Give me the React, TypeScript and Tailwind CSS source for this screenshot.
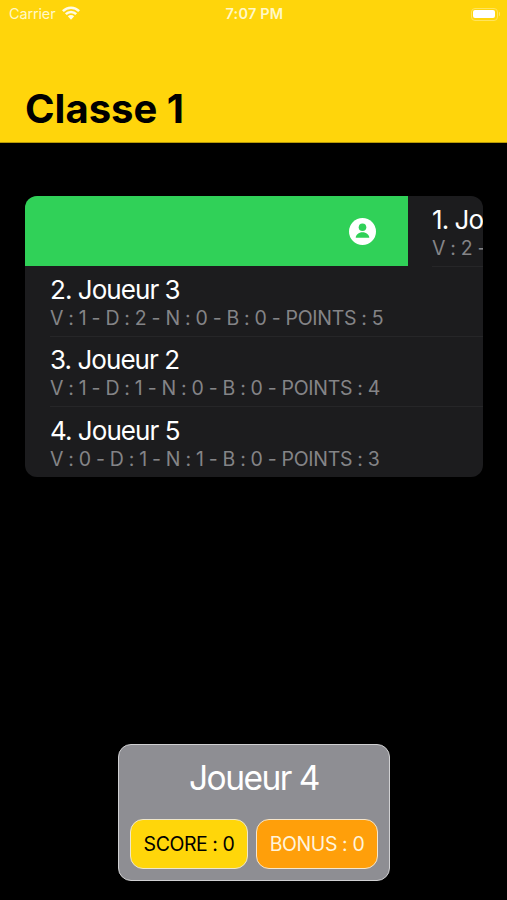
import React from 'react';

type Player = { name: string; stats: string };

const players: Player[] = [
  { name: '2. Joueur 3', stats: 'V : 1 - D : 2 - N : 0 - B : 0 - POINTS : 5' },
  { name: '3. Joueur 2', stats: 'V : 1 - D : 1 - N : 0 - B : 0 - POINTS : 4' },
  { name: '4. Joueur 5', stats: 'V : 0 - D : 1 - N : 1 - B : 0 - POINTS : 3' },
];

function WifiIcon() {
  return (
    <svg className="mb-[2px] h-[14px] w-[18px]" viewBox="0 0 18 14" fill="none" stroke="#fffbe6" strokeWidth="2.5">
      <path d="M.9 5.1C5.4 .5 12.6 .5 17.1 5.1" />
      <path d="M3.8 8.2c2.9-3 7.5-3 10.4 0" />
      <path d="M5.8 10.3c1.8-1.8 4.6-1.8 6.4 0L9 13.7z" fill="#fffbe6" stroke="none" />
    </svg>
  );
}

function Battery() {
  return (
    <div className="flex items-center gap-px">
      <div className="h-[13px] w-[27px] rounded-[4px] border border-[#ffe45c] p-[1.5px]">
        <div className="h-full rounded-[2px] bg-white" />
      </div>
      <div className="h-[4px] w-[1.5px] rounded-r bg-[#ffe45c]" />
    </div>
  );
}

function PersonIcon() {
  return (
    <svg className="size-[27px]" viewBox="0 0 27 27">
      <circle cx="13.5" cy="13.5" r="13.5" fill="#fff" />
      <circle cx="13.5" cy="9.2" r="3.8" fill="#30d158" />
      <path d="M6.7 19.8c0-3 3-5.6 6.8-5.6s6.8 2.6 6.8 5.6z" fill="#30d158" />
    </svg>
  );
}

function PlayerText({ name, stats }: Player) {
  return (
    <>
      <div className="h-[31px] text-[26px] leading-[30px] tracking-[-0.95px] text-white">{name}</div>
      <div className="h-[24px] text-[19.5px] leading-[24px] tracking-[-0.31px] text-[#848487]">{stats}</div>
    </>
  );
}

export default function App() {
  return (
    <div className="flex h-[900px] w-[507px] flex-col overflow-hidden bg-black font-['Inter',sans-serif] whitespace-nowrap">
      <header className="flex h-[143px] shrink-0 flex-col justify-between border-b border-[#b89a08] bg-[#ffd50b]">
        <div className="grid h-[28px] grid-cols-3 items-center pr-[7px] pl-[9px] text-[14.5px] text-[#fff8c8]">
          <div className="flex items-center gap-[7px]">
            <span className="tracking-[-0.15px]">Carrier</span>
            <WifiIcon />
          </div>
          <span className="text-center font-semibold tracking-[0.2px]">7:07 PM</span>
          <div className="flex justify-end">
            <Battery />
          </div>
        </div>
        <h1 className="mb-[8px] pl-[25px] text-[40px] leading-[50px] font-bold text-black">Classe 1</h1>
      </header>

      <main className="mt-[53px] ml-[25px] h-[281px] w-[458px] shrink-0 overflow-hidden rounded-[12px] bg-[#1c1c1e]">
        <div className="flex h-[70px] w-[840px]">
          <div className="flex w-[383px] shrink-0 items-center justify-end bg-[#30d158] pr-[32px]">
            <PersonIcon />
          </div>
          <div className="ml-[24px] h-[71px] w-[433px] border-b border-[#262628] pt-[8.5px]">
            <PlayerText name="1. Joueur 1" stats="V : 2 - D : 0 - N : 0 - B : 0 - POINTS : 6" />
          </div>
        </div>
        {players.map((player) => (
          <div key={player.name} className="ml-[25px] h-[70.5px] border-b border-[#262628] pt-[8.5px] last:border-0">
            <PlayerText {...player} />
          </div>
        ))}
      </main>

      <section className="mt-[267px] ml-[118px] h-[137px] w-[272px] shrink-0 rounded-[13px] border-[1.5px] border-[#d0d0d2] bg-[#8e8e93] px-[11px] pt-[12px]">
        <h2 className="h-[42px] text-center text-[33.5px] leading-[43px] tracking-[-1.5px] text-white">Joueur 4</h2>
        <div className="mt-[20px] flex justify-between">
          <button className="h-[50px] w-[118px] rounded-[13px] border-[1.5px] border-[#eee6cc] bg-[#ffd60a] pt-[2px] text-[19.5px] tracking-[-0.45px] text-black">
            SCORE : 0
          </button>
          <button className="h-[50px] w-[122px] rounded-[13px] border-[1.5px] border-[#f6e6cc] bg-[#ff9f0a] pt-[2px] text-[19.5px] tracking-[-0.4px] text-[#fff4dc]">
            BONUS : 0
          </button>
        </div>
      </section>
    </div>
  );
}
